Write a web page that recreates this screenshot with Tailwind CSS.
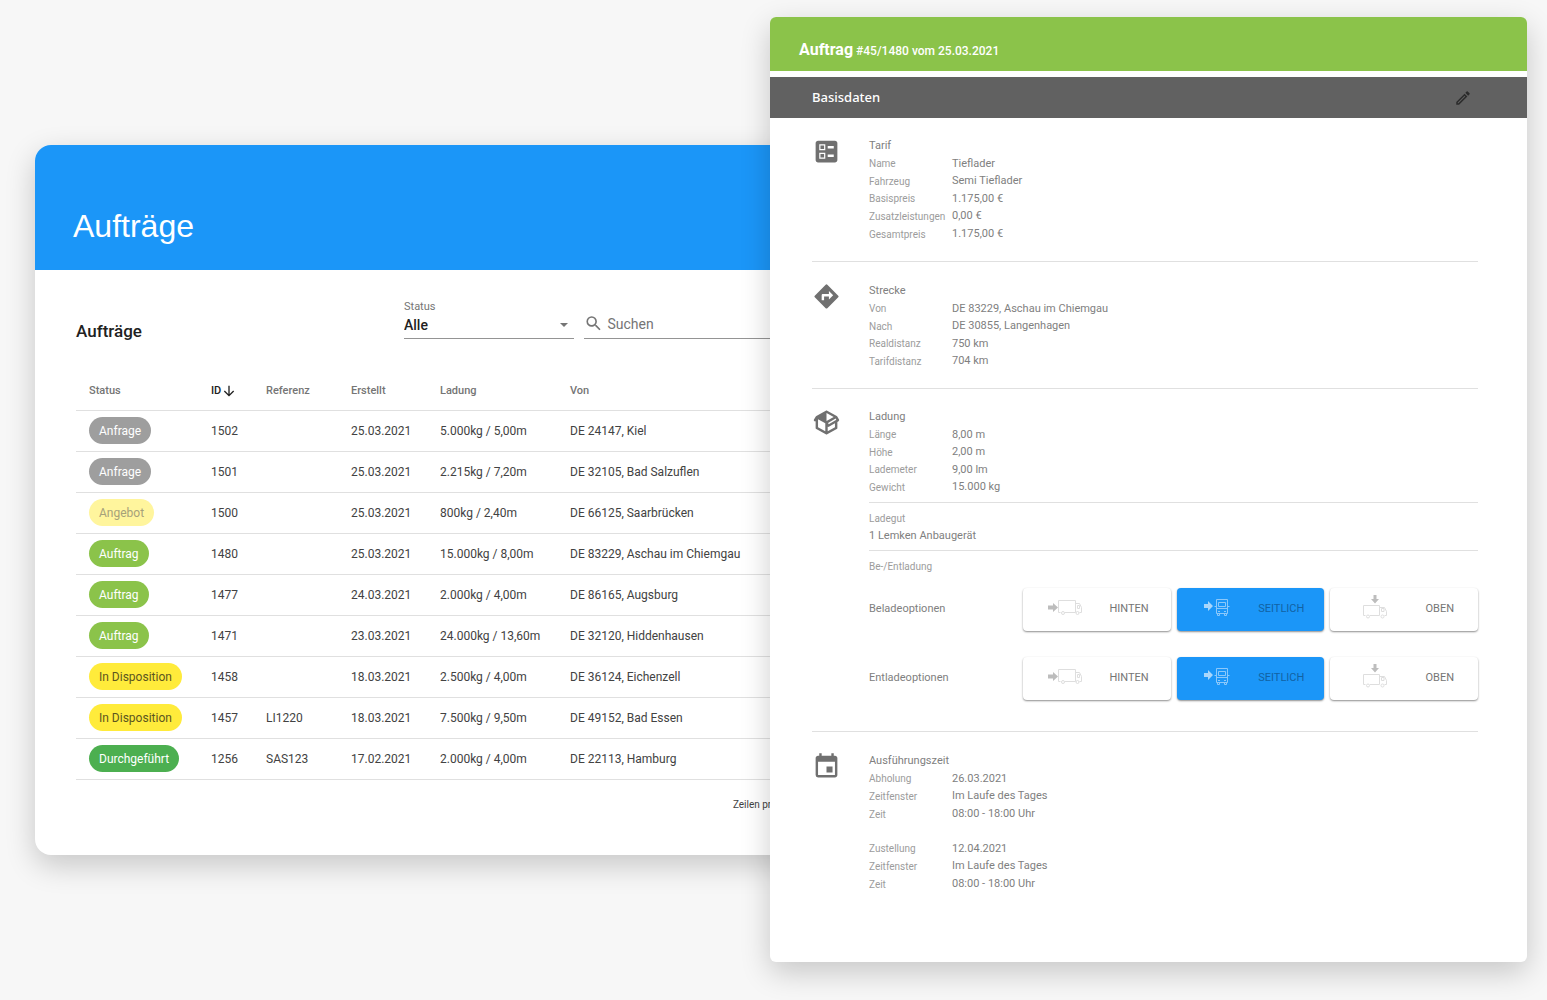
<!DOCTYPE html>
<html lang="de">
<head>
<meta charset="utf-8">
<meta name="viewport" content="width=device-width, initial-scale=1">
<title>Aufträge</title>
<script src="https://cdn.jsdelivr.net/npm/@tailwindcss/browser@4"></script>
</head>
<body class="min-h-screen overflow-x-hidden bg-[#f7f7f7] font-['Roboto',sans-serif] text-[#424242]">
<svg class="hidden" aria-hidden="true">
  <symbol id="truck-rear" viewBox="0 0 40 26">
    <path fill="#bdbdbd" d="M3 10.500h5V8l5 4.500-5 4.500v-2.500H3z"/>
    <g fill="none" stroke="#dedede"><path d="M13.500 5.500h17v12M13.500 5.500v12h2M20 17.500h10.500M30.500 8.500h4l2 4v5h-2M32.500 10.500h2v3h-2z"/><circle cx="18" cy="18" r="1.500"/><circle cx="32.500" cy="18" r="1.500"/></g>
  </symbol>
  <symbol id="truck-side" viewBox="0 0 40 26">
    <path fill="#a9d6fb" d="M7 9h4V6l5 5-5 5v-3H7z"/>
    <g fill="none" stroke="#8cc8fa"><path d="M19.500 4.500h11v14h-11zM21.500 7.500h7v4h-7zM17.500 11.500h2M30.500 11.500h2M19.500 13.500h11M21 16.500h2M27 16.500h2M20.500 18.500v2h2v-2M27.500 18.500v2h2v-2"/></g>
  </symbol>
  <symbol id="truck-top" viewBox="0 0 40 26">
    <path fill="#bdbdbd" d="M19.500 0h3v4H25l-4 4.500L17 4h2.500z"/>
    <g fill="none" stroke="#dedede"><path d="M9.500 10.500h16v10M9.500 10.500v10h2M16 20.500h9.500M25.500 12.500h5l2 4v4h-2M27.500 13.500h2.500v3h-2.500z"/><circle cx="14" cy="21.500" r="1.500"/><circle cx="28.500" cy="21.500" r="1.500"/></g>
  </symbol>
</svg>

<main class="grid grid-cols-[770fr_757fr] items-start pr-5 pt-[17px] pb-9">

  <section class="-mr-[120px] ml-[35px] mt-32 min-h-[710px] overflow-clip rounded-2xl bg-white shadow-[0_10px_30px_rgba(0,0,0,0.2)]">
    <header class="flex h-[125px] items-end bg-[#1b96f8] px-[38px] pb-6">
      <h1 class="font-['Liberation_Sans',sans-serif] text-[32px] leading-10 text-white">Aufträge</h1>
    </header>
    <div class="pl-[41px]">
      <div class="flex h-[69px] items-end">
        <h2 class="flex-1 text-[17px] font-medium leading-4 text-[#212121]">Aufträge</h2>
        <div class="mr-2.5 w-[170px] border-b border-[#949494]">
          <label for="status" class="block text-[11px] leading-3 text-[#757575]">Status</label>
          <div class="grid items-center pb-px">
            <select id="status" class="col-start-1 row-start-1 h-6 appearance-none text-sm font-medium text-[#212121]"><option>Alle</option></select>
            <svg class="pointer-events-none col-start-1 row-start-1 mr-1.5 h-1 w-2 justify-self-end" viewBox="0 0 8 4" fill="#757575"><path d="M0 0h8L4 4z"/></svg>
          </div>
        </div>
        <div class="flex h-[30px] w-[306px] items-center gap-1 border-b border-[#949494]">
          <svg class="size-[21px]" viewBox="0 0 24 24" fill="#757575"><path d="M15.500 14h-.790l-.280-.270A6.471 6.471 0 0 0 16 9.500 6.500 6.500 0 1 0 9.500 16c1.610 0 3.090-.590 4.230-1.570l.270.280v.790l5 4.990L20.490 19l-4.990-5zm-6 0C7.010 14 5 11.990 5 9.500S7.010 5 9.500 5 14 7.010 14 9.500 11.990 14 9.500 14z"/></svg>
          <input type="text" aria-label="Suchen" placeholder="Suchen" class="w-full text-sm outline-none placeholder:text-[#757575]">
        </div>
      </div>

      <table class="mt-[29px] w-full table-fixed text-left text-xs">
        <colgroup><col class="w-[122px]"><col class="w-[55px]"><col class="w-[85px]"><col class="w-[89px]"><col class="w-[130px]"><col></colgroup>
        <thead class="text-[11px] leading-4 text-[#757575]">
          <tr class="h-[42px] border-b border-[#e0e0e0] *:pl-[13px] *:pt-1 *:font-medium">
            <th>Status</th>
            <th class="text-[#212121]"><span class="flex items-center">ID<svg class="size-4" viewBox="0 0 24 24" fill="none" stroke="#212121" stroke-width="2"><path d="M12 4v15M5 12l7 7 7-7"/></svg></span></th>
            <th>Referenz</th><th>Erstellt</th><th>Ladung</th><th>Von</th>
          </tr>
        </thead>
        <tbody class="*:h-[41px] *:border-b *:border-[#e0e0e0] *:*:pl-[13px]">
          <tr><td><span class="inline-flex h-[27px] items-center rounded-full bg-[#9e9e9e] px-2.5 text-white">Anfrage</span></td><td>1502</td><td></td><td>25.03.2021</td><td>5.000kg / 5,00m</td><td>DE 24147, Kiel</td></tr>
          <tr><td><span class="inline-flex h-[27px] items-center rounded-full bg-[#9e9e9e] px-2.5 text-white">Anfrage</span></td><td>1501</td><td></td><td>25.03.2021</td><td>2.215kg / 7,20m</td><td>DE 32105, Bad Salzuflen</td></tr>
          <tr><td><span class="inline-flex h-[27px] items-center rounded-full bg-[#fff59d] px-2.5 text-[#a6a17a]">Angebot</span></td><td>1500</td><td></td><td>25.03.2021</td><td>800kg / 2,40m</td><td>DE 66125, Saarbrücken</td></tr>
          <tr><td><span class="inline-flex h-[27px] items-center rounded-full bg-[#8bc34a] px-2.5 text-white">Auftrag</span></td><td>1480</td><td></td><td>25.03.2021</td><td>15.000kg / 8,00m</td><td>DE 83229, Aschau im Chiemgau</td></tr>
          <tr><td><span class="inline-flex h-[27px] items-center rounded-full bg-[#8bc34a] px-2.5 text-white">Auftrag</span></td><td>1477</td><td></td><td>24.03.2021</td><td>2.000kg / 4,00m</td><td>DE 86165, Augsburg</td></tr>
          <tr><td><span class="inline-flex h-[27px] items-center rounded-full bg-[#8bc34a] px-2.5 text-white">Auftrag</span></td><td>1471</td><td></td><td>23.03.2021</td><td>24.000kg / 13,60m</td><td>DE 32120, Hiddenhausen</td></tr>
          <tr><td><span class="inline-flex h-[27px] items-center rounded-full bg-[#ffeb3b] px-2.5 text-[#5c5520]">In Disposition</span></td><td>1458</td><td></td><td>18.03.2021</td><td>2.500kg / 4,00m</td><td>DE 36124, Eichenzell</td></tr>
          <tr><td><span class="inline-flex h-[27px] items-center rounded-full bg-[#ffeb3b] px-2.5 text-[#5c5520]">In Disposition</span></td><td>1457</td><td>LI1220</td><td>18.03.2021</td><td>7.500kg / 9,50m</td><td>DE 49152, Bad Essen</td></tr>
          <tr><td><span class="inline-flex h-[27px] items-center rounded-full bg-[#4caf50] px-2.5 text-white">Durchgeführt</span></td><td>1256</td><td>SAS123</td><td>17.02.2021</td><td>2.000kg / 4,00m</td><td>DE 22113, Hamburg</td></tr>
        </tbody>
      </table>
      <p class="flex h-[50px] items-center justify-end pr-[86px] text-[10px]">Zeilen pro Seite:</p>
    </div>
  </section>

  <section class="relative z-10 min-h-[945px] overflow-clip rounded-md bg-white text-[11px] text-[#808080] shadow-[0_10px_30px_rgba(0,0,0,0.2)]">
    <header class="mb-1.5 flex h-[54px] items-end bg-[#8bc34a] px-[29px] pb-2.5 text-white">
      <h2 class="text-xs font-medium leading-5"><span class="text-base font-bold leading-5">Auftrag</span> #45/1480 vom 25.03.2021</h2>
    </header>
    <div class="flex h-[41px] items-center justify-between bg-[#616161] pl-[42px] pr-[55px]">
      <h3 class="font-['Noto_Sans',sans-serif] text-[13px] font-medium text-white">Basisdaten</h3>
      <button type="button" aria-label="Bearbeiten"><svg class="size-[18px]" viewBox="0 0 24 24" fill="#2b2b2b"><path d="M14.060 9.020l.920.920L5.920 19H5v-.920l9.060-9.060M17.660 3c-.250 0-.510.100-.700.290l-1.830 1.830 3.750 3.750 1.830-1.830a.996.996 0 0 0 0-1.410l-2.340-2.340A.982.982 0 0 0 17.660 3zm-3.600 3.190L3 17.250V21h3.750L17.810 9.940l-3.750-3.750z"/></svg></button>
    </div>

    <div class="pl-[42px] pr-[49px]">
      <section class="grid grid-cols-[57px_1fr] items-start border-b border-[#e0e0e0] pb-[18px] pt-[19px]">
        <svg class="size-[29px]" viewBox="0 0 24 24" fill="#707070"><path fill-rule="evenodd" d="M13 9.500h5v-2h-5v2zm0 7h5v-2h-5v2zM19 21H5c-1.100 0-2-.900-2-2V5c0-1.100.900-2 2-2h14c1.100 0 2 .900 2 2v14c0 1.100-.900 2-2 2zM6 11h5V6H6v5zm1-4h3v3H7V7zM6 18h5v-5H6v5zm1-4h3v3H7v-3z"/></svg>
        <div>
          <h4 class="leading-[18px]">Tarif</h4>
          <dl class="grid h-[88px] auto-rows-fr grid-cols-[83px_1fr] items-center [&_dt]:text-[10px] [&_dt]:text-[#9c9c9c]">
            <dt>Name</dt><dd>Tieflader</dd><dt>Fahrzeug</dt><dd>Semi Tieflader</dd><dt>Basispreis</dt><dd>1.175,00 €</dd><dt>Zusatzleistungen</dt><dd>0,00 €</dd><dt>Gesamtpreis</dt><dd>1.175,00 €</dd>
          </dl>
        </div>
      </section>

      <section class="grid grid-cols-[57px_1fr] items-start border-b border-[#e0e0e0] pb-[18px] pt-5">
        <svg class="size-[29px]" viewBox="0 0 24 24" fill="#707070"><path d="M21.710 11.290l-9-9a.996.996 0 0 0-1.410 0l-9 9a.996.996 0 0 0 0 1.410l9 9c.390.390 1.020.390 1.410 0l9-9a.996.996 0 0 0 0-1.410zM14 14.500V12h-4v3H8v-4c0-.550.450-1 1-1h5V7.500l3.500 3.500-3.500 3.500z"/></svg>
        <div>
          <h4 class="leading-[18px]">Strecke</h4>
          <dl class="grid h-[70px] auto-rows-fr grid-cols-[83px_1fr] items-center [&_dt]:text-[10px] [&_dt]:text-[#9c9c9c]">
            <dt>Von</dt><dd>DE 83229, Aschau im Chiemgau</dd><dt>Nach</dt><dd>DE 30855, Langenhagen</dd><dt>Realdistanz</dt><dd>750 km</dd><dt>Tarifdistanz</dt><dd>704 km</dd>
          </dl>
        </div>
      </section>

      <section class="grid grid-cols-[57px_1fr] items-start border-b border-[#e0e0e0] pb-[31px] pt-[19px]">
        <svg class="size-[29px]" viewBox="0 0 24 24" fill="#707070"><path d="M2 10.960C1.500 10.680 1.350 10.070 1.630 9.590L3.130 7C3.240 6.800 3.410 6.660 3.600 6.580L11.430 2.180C11.590 2.060 11.790 2 12 2C12.210 2 12.410 2.060 12.570 2.180L20.470 6.620C20.660 6.720 20.820 6.880 20.910 7.080L22.360 9.600C22.640 10.080 22.470 10.690 22 10.960L21 11.540V16.500C21 16.880 20.790 17.210 20.470 17.380L12.570 21.820C12.410 21.940 12.210 22 12 22C11.790 22 11.590 21.940 11.430 21.820L3.530 17.380C3.210 17.210 3 16.880 3 16.500V10.960C2.700 11.130 2.320 11.140 2 10.960M12 4.150V10.850L17.960 7.500L12 4.150M5 15.910L11 19.290V12.580L5 9.210V15.910M19 15.910V12.690L14 15.590C13.670 15.770 13.300 15.760 13 15.600V19.290L19 15.910M13.850 13.360L20.130 9.730L19.550 8.720L13.270 12.350L13.850 13.360Z"/></svg>
        <div>
          <h4 class="leading-[18px]">Ladung</h4>
          <dl class="grid h-[70px] auto-rows-fr grid-cols-[83px_1fr] items-center [&_dt]:text-[10px] [&_dt]:text-[#9c9c9c]">
            <dt>Länge</dt><dd>8,00 m</dd><dt>Höhe</dt><dd>2,00 m</dd><dt>Lademeter</dt><dd>9,00 lm</dd><dt>Gewicht</dt><dd>15.000 kg</dd>
          </dl>
          <div class="mt-1.5 border-y border-[#e0e0e0] pb-1.5 pt-[7px]">
            <h5 class="text-[10px] leading-[17px] text-[#9c9c9c]">Ladegut</h5>
            <p class="leading-[17px]">1 Lemken Anbaugerät</p>
          </div>
          <h5 class="mt-2 text-[10px] leading-4 text-[#9c9c9c]">Be-/Entladung</h5>
          <div class="mt-[13px] grid gap-[26px]">
            <div class="grid grid-cols-[148px_1fr_1fr_1fr] items-center gap-1.5" role="group" aria-labelledby="load">
              <span id="load">Beladeoptionen</span>
              <button type="button" class="flex h-[43px] items-center justify-between rounded-sm px-[22px] shadow-[0_1px_2px_rgba(0,0,0,0.45)] text-[#757575]"><svg class="-mt-1 h-[26px] w-10"><use href="#truck-rear"/></svg>HINTEN</button>
              <button type="button" class="flex h-[43px] items-center justify-between rounded-sm bg-[#1b96f8] px-5 shadow-[0_1px_2px_rgba(0,0,0,0.45)] text-[#1262a3]"><svg class="-mt-1 h-[26px] w-10"><use href="#truck-side"/></svg>SEITLICH</button>
              <button type="button" class="flex h-[43px] items-center justify-between rounded-sm px-6 shadow-[0_1px_2px_rgba(0,0,0,0.45)] text-[#757575]"><svg class="-mt-1 h-[26px] w-10"><use href="#truck-top"/></svg>OBEN</button>
            </div>
            <div class="grid grid-cols-[148px_1fr_1fr_1fr] items-center gap-1.5" role="group" aria-labelledby="unload">
              <span id="unload">Entladeoptionen</span>
              <button type="button" class="flex h-[43px] items-center justify-between rounded-sm px-[22px] shadow-[0_1px_2px_rgba(0,0,0,0.45)] text-[#757575]"><svg class="-mt-1 h-[26px] w-10"><use href="#truck-rear"/></svg>HINTEN</button>
              <button type="button" class="flex h-[43px] items-center justify-between rounded-sm bg-[#1b96f8] px-5 shadow-[0_1px_2px_rgba(0,0,0,0.45)] text-[#1262a3]"><svg class="-mt-1 h-[26px] w-10"><use href="#truck-side"/></svg>SEITLICH</button>
              <button type="button" class="flex h-[43px] items-center justify-between rounded-sm px-6 shadow-[0_1px_2px_rgba(0,0,0,0.45)] text-[#757575]"><svg class="-mt-1 h-[26px] w-10"><use href="#truck-top"/></svg>OBEN</button>
            </div>
          </div>
        </div>
      </section>

      <section class="grid grid-cols-[57px_1fr] items-start pt-5">
        <svg class="size-[29px]" viewBox="0 0 24 24" fill="#707070"><path d="M17 12h-5v5h5v-5zM16 1v2H8V1H6v2H5c-1.110 0-1.990.900-1.990 2L3 19a2 2 0 0 0 2 2h14c1.100 0 2-.900 2-2V5c0-1.100-.900-2-2-2h-1V1h-2zm3 18H5V8h14v11z"/></svg>
        <div>
          <h4 class="leading-[18px]">Ausführungszeit</h4>
          <dl class="grid h-[53px] auto-rows-fr grid-cols-[83px_1fr] items-center [&_dt]:text-[10px] [&_dt]:text-[#9c9c9c]">
            <dt>Abholung</dt><dd>26.03.2021</dd><dt>Zeitfenster</dt><dd>Im Laufe des Tages</dd><dt>Zeit</dt><dd>08:00 - 18:00 Uhr</dd>
          </dl>
          <dl class="mt-[17px] grid h-[53px] auto-rows-fr grid-cols-[83px_1fr] items-center [&_dt]:text-[10px] [&_dt]:text-[#9c9c9c]">
            <dt>Zustellung</dt><dd>12.04.2021</dd><dt>Zeitfenster</dt><dd>Im Laufe des Tages</dd><dt>Zeit</dt><dd>08:00 - 18:00 Uhr</dd>
          </dl>
        </div>
      </section>
    </div>
  </section>
</main>
</body>
</html>
